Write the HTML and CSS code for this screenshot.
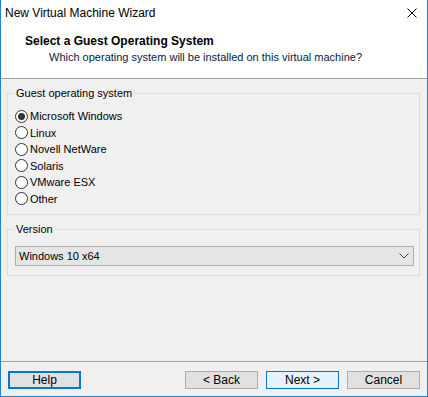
FILE: index.html
```html
<!DOCTYPE html>
<html lang="en">
<head>
  <meta charset="UTF-8">
  <title>New Virtual Machine Wizard</title>
  <link rel="stylesheet" href="styles.css">
</head>
<body>
  <div class="window">
    <div class="titlebar">
      <span class="title">New Virtual Machine Wizard</span>
      <svg class="close" width="10" height="10" viewBox="0 0 10 10">
        <path d="M0.5 0.5 L9.5 9.5 M9.5 0.5 L0.5 9.5" stroke="#000" stroke-width="1" fill="none"/>
      </svg>
    </div>

    <div class="header">
      <div class="heading">Select a Guest Operating System</div>
      <div class="subheading">Which operating system will be installed on this virtual machine?</div>
    </div>

    <div class="content">
      <fieldset class="group">
        <legend>Guest operating system</legend>
        <label class="option"><input type="radio" name="os" checked> Microsoft Windows</label>
        <label class="option"><input type="radio" name="os"> Linux</label>
        <label class="option"><input type="radio" name="os"> Novell NetWare</label>
        <label class="option"><input type="radio" name="os"> Solaris</label>
        <label class="option"><input type="radio" name="os"> VMware ESX</label>
        <label class="option"><input type="radio" name="os"> Other</label>
      </fieldset>

      <fieldset class="group version">
        <legend>Version</legend>
        <div class="dropdown">
          <span>Windows 10 x64</span>
          <svg width="10" height="6" viewBox="0 0 10 6">
            <path d="M0.5 0.5 L5 5 L9.5 0.5" stroke="#444" stroke-width="1" fill="none"/>
          </svg>
        </div>
      </fieldset>
    </div>

    <div class="footer">
      <button class="btn focused">Help</button>
      <div class="nav">
        <button class="btn">&lt; Back</button>
        <button class="btn primary">Next &gt;</button>
        <button class="btn">Cancel</button>
      </div>
    </div>
  </div>
</body>
</html>
```

FILE: styles.css
```css
body {
  margin: 0;
  font-family: "Liberation Sans", Arial, sans-serif;
  font-size: 11px;
  color: #000;
}

.window {
  width: 428px;
  height: 397px;
  box-sizing: border-box;
  border: 1px solid #1883d7;
  border-top: none;
  background-color: #f0f0f0;
  display: flex;
  flex-direction: column;
}

.titlebar {
  height: 30px;
  background-color: #fff;
  display: flex;
  align-items: center;
  justify-content: space-between;
  padding: 0 10px 0 4px;
}

.title {
  font-size: 12px;
  margin-top: -5px;
}

.close {
  margin-top: -5px;
}

.header {
  height: 48px;
  background-color: #fff;
  border-bottom: 1px solid #a0a0a0;
  padding-left: 24px;
}

.heading {
  font-weight: bold;
  font-size: 12px;
  margin-top: 4px;
}

.subheading {
  color: #0a1a3a;
  margin-top: 3px;
  padding-left: 24px;
}

.content {
  flex: 1;
  padding: 7px 7px 0 6px;
}

.group {
  margin: 0;
  border: 1px solid #dcdcdc;
  padding: 8px 5px 7px 7px;
}

.group legend {
  padding: 0 2px;
  margin-left: -1px;
  line-height: 14px;
}

.option {
  display: flex;
  align-items: center;
  height: 16.5px;
  gap: 2px;
}

.option input {
  appearance: none;
  margin: 0;
  width: 13px;
  height: 13px;
  border: 1px solid #333;
  border-radius: 50%;
  background-color: #fff;
  box-sizing: border-box;
  display: grid;
  place-items: center;
}

.option input:checked::after {
  content: "";
  width: 7px;
  height: 7px;
  border-radius: 50%;
  background-color: #333;
}

.version {
  margin-top: 7px;
  padding-top: 10px;
  padding-bottom: 9px;
}

.dropdown {
  height: 20px;
  box-sizing: border-box;
  border: 1px solid #adadad;
  background-color: #e5e5e5;
  display: flex;
  align-items: center;
  justify-content: space-between;
  padding: 0 4px 0 3px;
}

.footer {
  border-top: 1px solid #a0a0a0;
  padding: 9px 7px 7px 7px;
  display: flex;
  justify-content: space-between;
}

.nav {
  display: flex;
  gap: 8px;
}

.btn {
  width: 73px;
  height: 18px;
  box-sizing: border-box;
  font-family: inherit;
  font-size: 12px;
  padding: 0;
  border: 1px solid #adadad;
  background-color: #e1e1e1;
  color: #000;
}

.btn.focused {
  border: 2px solid #0078d7;
}

.btn.primary {
  border-color: #0078d7;
  background-color: #e5f1fb;
}
```
